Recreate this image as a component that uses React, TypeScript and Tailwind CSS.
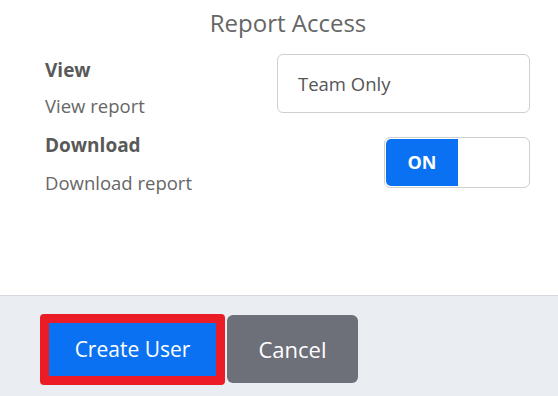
export default function App() {
  return (
    <div className="w-[558px] h-[396px] bg-white flex flex-col text-[#5f5f5f]" style={{ fontFamily: '"Open Sans", "Noto Sans", sans-serif' }}>
      <div className="h-[296px] border-b border-[#d3d8de] flex flex-col">
        <div className="h-[46px] flex items-center justify-center pl-[18px] text-[24px] text-[#666]">Report Access</div>
        <div className="flex justify-between pl-[45px] pr-[28px] pt-[8px]">
          <div className="flex flex-col">
            <div className="h-[32px] flex items-center text-[19px] font-bold text-[#595959]">View</div>
            <div className="h-[40px] flex items-center text-[18.5px] text-[#666]">View report</div>
            <div className="h-[38px] flex items-center text-[19px] font-bold text-[#595959]">Download</div>
            <div className="h-[38px] flex items-center text-[18.5px] text-[#666]">Download report</div>
          </div>
          <div className="flex flex-col items-end w-[253px]">
            <div className="w-[253px] h-[59px] border border-[#cfcfcf] rounded-[6px] flex items-center pl-[20px] text-[18.5px] text-[#555]">Team Only</div>
            <div className="mt-[24px] w-[146px] h-[51px] border border-[#cfcfcf] rounded-[6px] p-[1px] flex">
              <div className="w-[72px] h-full bg-[#0a72f2] rounded-l-[5px] flex items-center justify-center text-white font-bold text-[18px]">ON</div>
            </div>
          </div>
        </div>
      </div>
      <div className="flex-1 bg-[#eaeef2] flex items-start pl-[40px] pt-[18px] gap-[2px]">
        <div className="border-[9px] border-[#ec1c27] rounded-[4px]">
          <div className="w-[167px] h-[53px] bg-[#0a72f2] flex items-center justify-center text-white text-[21px]">Create User</div>
        </div>
        <div className="mt-[1px] w-[131px] h-[68px] bg-[#6d7079] rounded-[6px] flex items-center justify-center text-white text-[22px]">Cancel</div>
      </div>
    </div>
  );
}
